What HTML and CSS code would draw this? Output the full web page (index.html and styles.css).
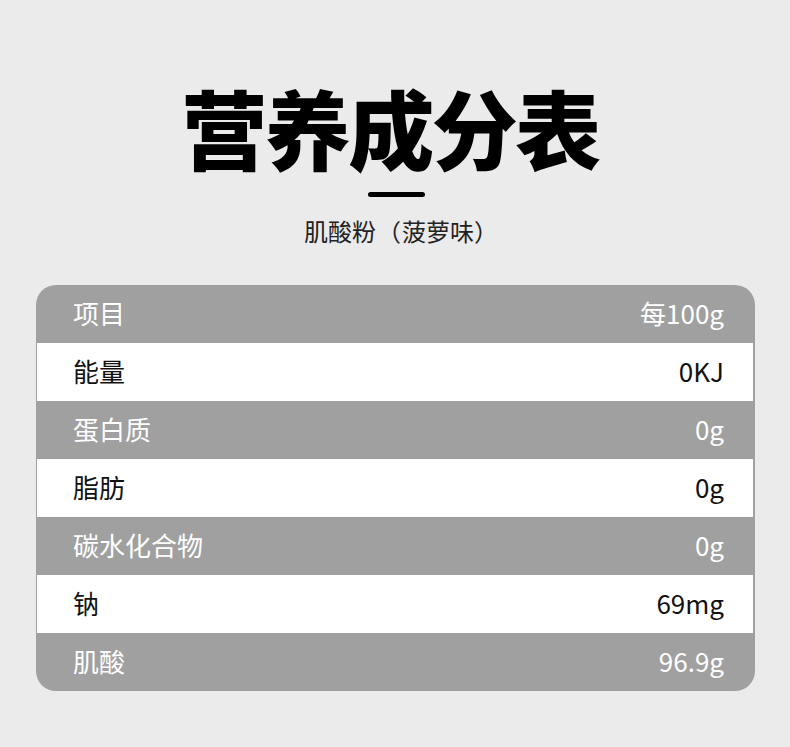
FILE: index.html
```html
<!DOCTYPE html>
<html lang="zh">
<head>
<meta charset="utf-8">
<link rel="stylesheet" href="styles.css">
</head>
<body>
<div class="page">
  <h1 class="title">营养成分表</h1>
  <div class="bar"></div>
  <p class="sub">肌酸粉<span class="po">（</span>菠萝味<span class="pc">）</span></p>
  <div class="table">
    <div class="row dark"><span>项目</span><span>每100g</span></div>
    <div class="row light"><span>能量</span><span>0KJ</span></div>
    <div class="row dark"><span>蛋白质</span><span>0g</span></div>
    <div class="row light"><span>脂肪</span><span>0g</span></div>
    <div class="row dark"><span>碳水化合物</span><span>0g</span></div>
    <div class="row light"><span>钠</span><span>69mg</span></div>
    <div class="row dark"><span>肌酸</span><span>96.9g</span></div>
  </div>
</div>
</body>
</html>
```
FILE: styles.css
```css
html, body {
  margin: 0;
  padding: 0;
  background: #ebebeb;
}
.page {
  width: 790px;
  height: 747px;
  font-family: "Noto Sans CJK SC", "Noto Sans", sans-serif;
  display: flex;
  flex-direction: column;
  align-items: center;
  padding-top: 75px;
  box-sizing: border-box;
}
.title {
  margin: 0 0 0 -10px;
  font-size: 86px;
  font-weight: 900;
  line-height: 104px;
  letter-spacing: -2.5px;
  color: #000;
}
.bar {
  width: 57px;
  height: 5px;
  border-radius: 3px;
  background: #000;
  margin-top: 13px;
  margin-left: 2px;
}
.sub {
  margin: 17px 0 0 8px;
  font-size: 24px;
  line-height: 34px;
  color: #222;
  white-space: nowrap;
}
.po, .pc {
  display: inline-block;
  text-align: center;
}
.po {
  width: 26px;
}
.pc {
  width: 20px;
}
.table {
  margin-top: 37px;
  width: 719px;
  margin-left: 1px;
  background: #a0a0a0;
  border-radius: 20px;
  padding: 0 2px 0 1px;
  box-sizing: border-box;
  overflow: hidden;
}
.row {
  height: 58px;
  display: flex;
  justify-content: space-between;
  align-items: center;
  padding: 0 29px 4px 36px;
  box-sizing: border-box;
  font-size: 26px;
}
.row.dark {
  color: #fff;
}
.row.light {
  background: #fff;
  color: #111;
}
```
